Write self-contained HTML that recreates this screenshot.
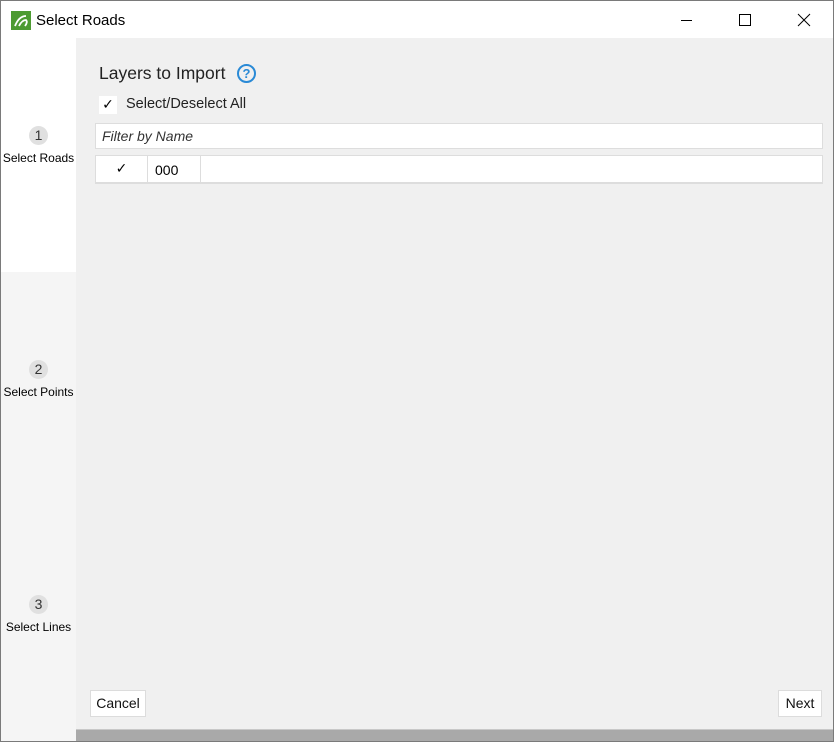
<!DOCTYPE html>
<html><head><meta charset="utf-8"><style>
*{margin:0;padding:0;box-sizing:border-box}
body{width:834px;height:742px;overflow:hidden;font-family:"Segoe UI","Liberation Sans",sans-serif;background:#fff;position:relative}
.win{position:absolute;left:0;top:0;width:834px;height:742px;border:1px solid #7a7a7a}
.title{position:absolute;left:0;top:0;width:832px;height:37px;background:#fff}
.logo{position:absolute;left:10px;top:10px;width:20px;height:19px;background:#4d9b32}
.ttext{position:absolute;left:35px;top:11px;font-size:15px;color:#000}
.side{position:absolute;left:0;top:37px;width:75px;height:703px;background:#f5f5f5}
.side .act{position:absolute;left:0;top:0;width:75px;height:234px;background:#fff}
.step{position:absolute;left:0;width:75px;text-align:center;font-size:12px;color:#000}
.num{display:block;margin:0 auto 6px;width:19px;height:19px;border-radius:50%;background:#e0e0e0;font-size:14px;line-height:19px;color:#333}
.main{position:absolute;left:75px;top:37px;width:757px;height:691px;background:#f0f0f0}
.bar{position:absolute;left:75px;top:728px;width:757px;height:12px;background:#a9a9a9;border-top:1px solid #c8c8c8}
.h{position:absolute;left:98px;top:62px;font-size:17.5px;color:#222}
.q{position:absolute;left:236px;top:63px;width:19px;height:19px;border:2px solid #2a8ad6;border-radius:50%;color:#2a8ad6;font-size:13px;font-weight:bold;text-align:center;line-height:15px}
.cb{position:absolute;left:98px;top:95px;width:18px;height:18px;background:#fff;font-size:14px;text-align:center;line-height:18px;font-family:"DejaVu Sans",sans-serif}
.sel{position:absolute;left:125px;top:95px;font-size:14.5px;color:#222}
.filter{position:absolute;left:94px;top:122px;width:728px;height:26px;background:#fff;border:1px solid #ddd;font-style:italic;font-size:14px;padding:4px 6px;color:#333}
.row{position:absolute;left:94px;top:154px;width:728px;height:29px;background:#fff;border:1px solid #ddd;border-bottom:2px solid #ddd}
.c1{position:absolute;left:0;top:0;width:52px;height:27px;border-right:1px solid #ddd;text-align:center;line-height:27px;font-size:14px;font-family:"DejaVu Sans",sans-serif}
.c2{position:absolute;left:52px;top:0;width:53px;height:27px;border-right:1px solid #ddd;padding-left:7px;line-height:28px;font-size:14px}
.btn{position:absolute;top:689px;height:27px;background:#fff;border:1px solid #dcdcdc;font-size:14px;line-height:25px;text-align:center;color:#111}
</style></head><body>
<div class="win">
<div class="title">
 <div class="logo"><svg width="20" height="19" viewBox="0 0 20 19"><path d="M4 15 Q8 5 15 5 M8 15 Q11 9 15 9 Q17 11 14 15" stroke="#fff" stroke-width="1.8" fill="none"/></svg></div>
 <div class="ttext">Select Roads</div>
 <svg style="position:absolute;left:680px;top:12px" width="140" height="16"><line x1="0" y1="7.5" x2="11" y2="7.5" stroke="#000"/><rect x="58.5" y="1.5" width="11" height="11" fill="none" stroke="#000"/><path d="M117 1 L129 13 M129 1 L117 13" stroke="#000"/></svg>
</div>
<div class="side"><div class="act"></div>
 <div class="step" style="top:88px"><span class="num">1</span>Select Roads</div>
 <div class="step" style="top:322px"><span class="num">2</span>Select Points</div>
 <div class="step" style="top:557px"><span class="num">3</span>Select Lines</div>
</div>
<div class="main"></div>
<div class="h">Layers to Import</div>
<div class="q">?</div>
<div class="cb">✓</div>
<div class="sel">Select/Deselect All</div>
<div class="filter">Filter by Name</div>
<div class="row"><div class="c1">✓</div><div class="c2">000</div></div>
<div class="btn" style="left:89px;width:56px">Cancel</div>
<div class="btn" style="left:777px;width:44px">Next</div>
<div class="bar"></div>
</div>
</body></html>
